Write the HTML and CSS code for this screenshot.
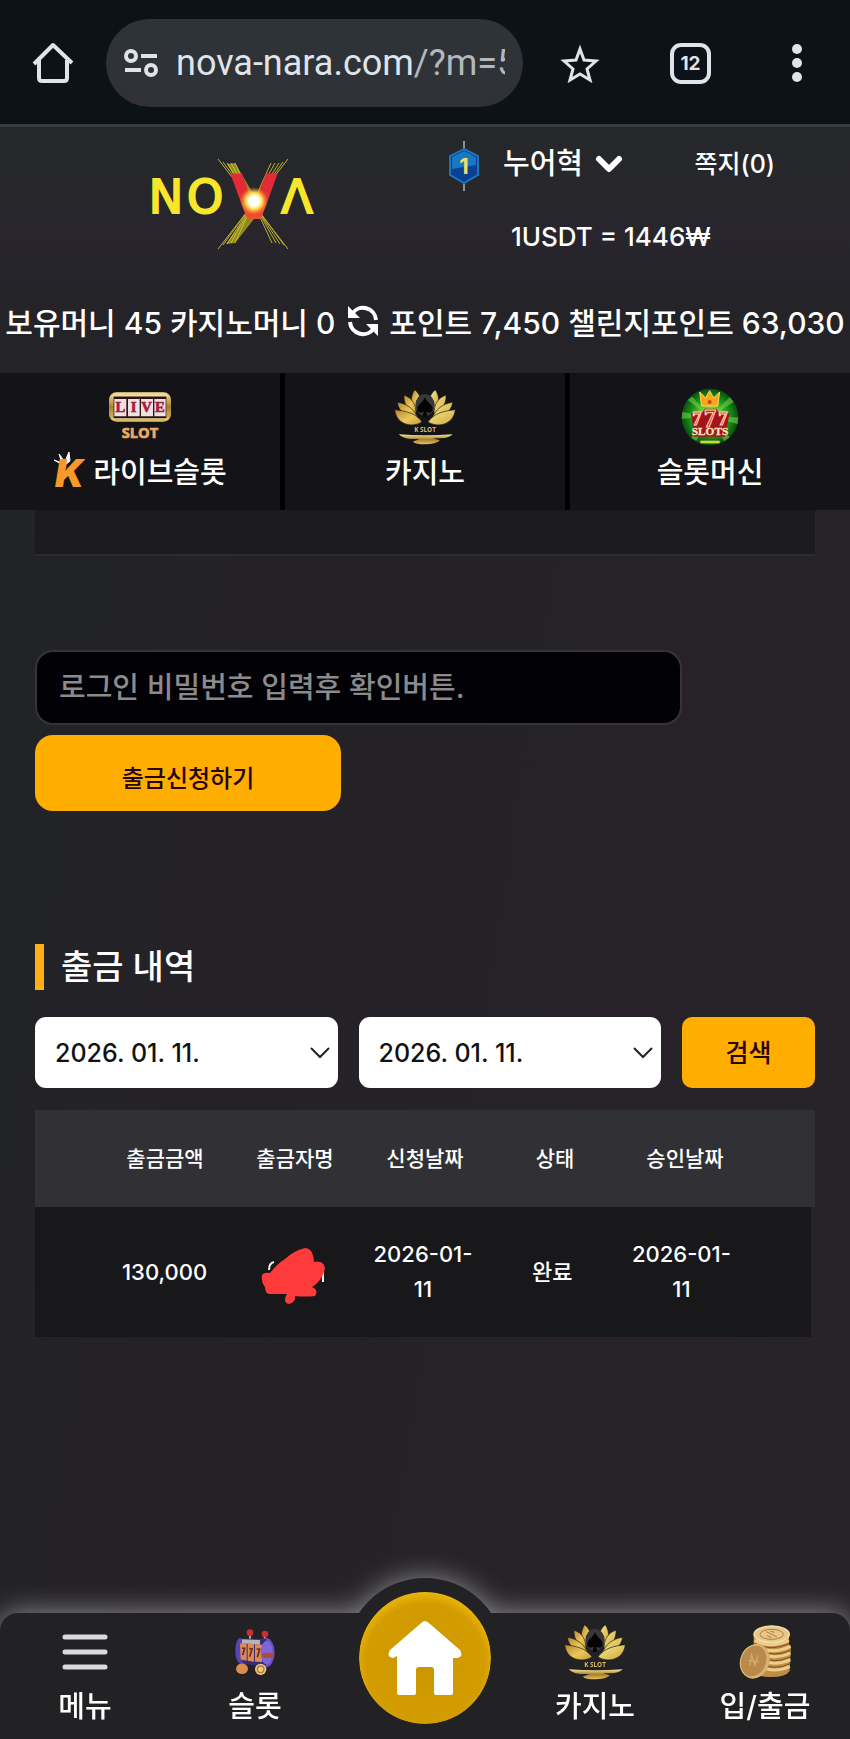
FILE: index.html
```
<!DOCTYPE html>
<html lang="ko">
<head>
  <meta charset="UTF-8">
  <meta name="viewport" content="width=device-width, initial-scale=1.0">
  <title>NOVA - 출금신청</title>
  <link rel="stylesheet" href="styles.css">
</head>
<body>
  <!-- Shared gradients and symbols -->
  <svg class="defs" width="0" height="0" aria-hidden="true">
    <defs>
      <linearGradient id="gold" x1="0" y1="0" x2="1" y2="1">
        <stop offset="0" stop-color="#b9822b"/>
        <stop offset="0.55" stop-color="#e9c95c"/>
        <stop offset="1" stop-color="#c79a35"/>
      </linearGradient>
      <linearGradient id="gold-light" x1="0" y1="0" x2="1" y2="1">
        <stop offset="0" stop-color="#f5ec8a"/>
        <stop offset="1" stop-color="#cfa53c"/>
      </linearGradient>
      <linearGradient id="gold-bar" x1="0" y1="0" x2="0" y2="1">
        <stop offset="0" stop-color="#f4e59a"/>
        <stop offset="0.5" stop-color="#a87f2c"/>
        <stop offset="1" stop-color="#e2c35f"/>
      </linearGradient>
      <symbol id="lotus" viewBox="0 0 186 168">
        <g fill="url(#gold)" stroke="#1a181a" stroke-width="2">
          <path d="M62 2 C82 18 84 40 70 66 C48 46 48 24 62 2Z"/>
          <path d="M30 18 C56 28 66 48 66 74 C42 64 28 44 30 18Z"/>
          <path d="M10 40 C40 44 62 62 72 88 C40 86 14 70 10 40Z"/>
          <path d="M2 62 C36 66 64 72 84 98 C62 116 8 112 2 62Z"/>
        </g>
        <g fill="url(#gold-light)" stroke="#1a181a" stroke-width="2">
          <path d="M124 2 C104 18 102 40 116 66 C138 46 138 24 124 2Z"/>
          <path d="M156 18 C130 28 120 48 120 74 C144 64 158 44 156 18Z"/>
          <path d="M176 40 C146 44 124 62 114 88 C146 86 172 70 176 40Z"/>
          <path d="M184 62 C150 66 122 72 102 98 C124 116 178 112 184 62Z"/>
        </g>
        <ellipse cx="93" cy="48" rx="29" ry="33" fill="#37373c"/>
        <path d="M93 24 C88 42 68 46 70 62 C72 74 86 72 90 66 L86 84 H100 L96 66 C100 72 114 74 116 62 C118 46 98 42 93 24Z" fill="#050506"/>
        <text x="93" y="129" class="lotus-text">K SLOT</text>
        <path d="M14 136 Q93 142 176 136 Q164 148 140 148 H116 L138 154 Q126 166 93 166 Q66 166 56 158 L76 150 H50 Q26 148 14 136Z" fill="url(#gold-bar)"/>
      </symbol>
    </defs>
  </svg>

  <!-- Browser bar -->
  <div class="browser-bar">
    <button class="browser-btn" aria-label="홈">
      <svg width="42" height="42" viewBox="0 0 42 42" fill="none" stroke="#dfe3ea" stroke-width="4">
        <path d="M2 22 L21 3 L40 21 M7 18 V36 Q7 39 10 39 H32 Q35 39 35 36 V18" stroke-linejoin="round"/>
      </svg>
    </button>
    <div class="address">
      <svg class="address-icon" width="34" height="28" viewBox="0 0 34 28" fill="none" stroke="#dfe3ea" stroke-width="4">
        <circle cx="7" cy="7" r="5"/>
        <path d="M17 7 H33 M1 21 H17"/>
        <circle cx="27" cy="21" r="5"/>
      </svg>
      <span class="address-text">nova-nara.com<span class="address-query">/?m=5</span></span>
    </div>
    <button class="browser-btn star" aria-label="북마크">
      <svg width="40" height="40" viewBox="0 0 40 40" fill="none" stroke="#dfe3ea" stroke-width="3">
        <path d="M20 6 L24 17 L36 18 L27 26 L30 37 L20 31 L10 37 L13 26 L4 18 L16 17 Z"/>
      </svg>
    </button>
    <button class="browser-btn tabs" aria-label="탭">12</button>
    <button class="browser-btn more" aria-label="더보기">
      <svg width="10" height="38" viewBox="0 0 10 38" fill="#dfe3ea">
        <circle cx="5" cy="5" r="5"/><circle cx="5" cy="19" r="5"/><circle cx="5" cy="33" r="5"/>
      </svg>
    </button>
  </div>

  <!-- Site header -->
  <header class="header">
    <a href="#" class="logo" aria-label="NOVA">
      <svg width="172" height="94" viewBox="0 0 172 94">
        <defs>
          <radialGradient id="flare">
            <stop offset="0.35" stop-color="#fff"/>
            <stop offset="0.6" stop-color="#ffd94a"/>
            <stop offset="1" stop-color="#ff8a1e" stop-opacity="0"/>
          </radialGradient>
          <linearGradient id="vred" x1="0" y1="0" x2="0" y2="1">
            <stop offset="0.4" stop-color="#e32a35"/>
            <stop offset="1" stop-color="#f2672f"/>
          </linearGradient>
        </defs>
        <g stroke="#bdb42c" stroke-width="1">
          <path d="M71 2 L141 92 M76 5 L137 88 M80 6 L133 87 M84 6 L129 86 M88 6 L125 86"/>
          <path d="M141 2 L71 92 M136 5 L76 88 M132 6 L80 87 M128 6 L84 86 M124 6 L88 86"/>
        </g>
        <path d="M80 7 L88 6 L107 38 L102 44Z M100 58 L107 62 L88 86 L79 87Z" fill="#d8cc22" opacity="0.6"/>
        <text x="19" y="56" class="logo-text">N</text>
        <text x="58" y="56" class="logo-text">O</text>
        <text x="150" y="56" class="logo-text">Λ</text>
        <text x="107" y="62" class="logo-v">V</text>
        <circle cx="107" cy="44" r="14" fill="url(#flare)"/>
      </svg>
    </a>
    <div class="account">
      <div class="account-row">
        <svg width="30" height="50" viewBox="0 0 30 50">
          <path d="M15 0 V50" stroke="#8d9094" stroke-width="2"/>
          <path d="M15 8 L29 15 V34 L15 42 L1 34 V15Z" fill="#0b3f92" stroke="#1c75b8" stroke-width="2"/>
          <path d="M15 10 L27 16 V24 L3 28 V16Z" fill="#1878c4"/>
          <text x="15" y="33" class="badge-text">1</text>
        </svg>
        <button class="user">누어혁
          <svg width="28" height="18" viewBox="0 0 28 18" fill="none" stroke="#fff" stroke-width="6" stroke-linecap="round" stroke-linejoin="round">
            <path d="M4 4 L14 14 L24 4"/>
          </svg>
        </button>
        <a href="#" class="message">쪽지(0)</a>
      </div>
      <div class="rate">1USDT = 1446₩</div>
    </div>
  </header>

  <!-- Balances -->
  <div class="balance">
    <span>보유머니 45 카지노머니 0</span>
    <button class="refresh" aria-label="새로고침">
      <svg width="32" height="32" viewBox="0 0 32 32">
        <path d="M5 9 A13 13 0 0 1 29 15 M27 23 A13 13 0 0 1 3 17" fill="none" stroke="#fff" stroke-width="4"/>
        <path d="M1 1 V13 H13Z M31 31 V19 H19Z" fill="#fff"/>
      </svg>
    </button>
    <span>포인트 7,450 챌린지포인트 63,030</span>
  </div>

  <!-- Game tabs -->
  <nav class="game-nav">
    <a href="#" class="game-item">
      <span class="game-icon">
        <svg width="64" height="52" viewBox="0 0 190 156">
          <rect x="2" y="4" width="186" height="88" rx="22" fill="url(#gold-bar)"/>
          <rect x="16" y="12" width="158" height="74" rx="4" fill="#2a1417"/>
          <path d="M18 24 H54 V76 H18Z M59 24 H94 V76 H59Z M98 24 H134 V76 H98Z M138 24 H172 V76 H138Z" fill="#eedfe1"/>
          <path d="M12 14 H178 M12 84 H178" stroke="#f2dfa0" stroke-width="5"/>
          <text x="36" y="64" class="live-text">L</text>
          <text x="76" y="64" class="live-text">I</text>
          <text x="115" y="64" class="live-text">V</text>
          <text x="155" y="64" class="live-text">E</text>
          <text x="95" y="140" class="slot-text">SLOT</text>
        </svg>
      </span>
      <span class="game-label">
        <svg class="k-mark" width="36" height="38" viewBox="0 0 36 38">
          <path d="M1 9 L8 13 L12 14 L17 10 L16 1 L13 8 L12 11 L6 3 L9 12Z" fill="#fff" stroke="#fff"/>
          <text x="2" y="36" class="k-text">K</text>
        </svg>
        라이브슬롯
      </span>
    </a>
    <a href="#" class="game-item">
      <span class="game-icon"><svg width="62" height="56"><use href="#lotus"/></svg></span>
      <span class="game-label">카지노</span>
    </a>
    <a href="#" class="game-item">
      <span class="game-icon">
        <svg width="58" height="58" viewBox="0 0 174 174">
          <defs>
            <radialGradient id="green">
              <stop offset="0.2" stop-color="#a8e23a"/>
              <stop offset="0.65" stop-color="#1f9a1d"/>
              <stop offset="1" stop-color="#06500f"/>
            </radialGradient>
          </defs>
          <circle cx="87" cy="87" r="85" fill="url(#green)"/>
          <path d="M87 87 L20 36 L34 26Z M87 87 L146 28 L158 42Z M87 87 L2 92 L4 72Z M87 87 L172 88 L170 108Z M87 87 L30 150 L46 158Z M87 87 L130 160 L146 148Z" fill="#6fce45" opacity="0.6"/>
          <path d="M62 54 L56 12 L74 30 L86 8 L98 30 L116 12 L110 54Z" fill="#f6a51d" stroke="#ffdc67" stroke-width="3"/>
          <circle cx="86" cy="42" r="6" fill="#c9401c"/>
          <path d="M30 76 L66 72 L70 62 H106 L112 72 L146 76 L132 146 H40Z" fill="#a3141c"/>
          <text x="48" y="112" class="seven-text">7</text>
          <text x="126" y="112" class="seven-text">7</text>
          <text x="87" y="116" class="seven-text big">7</text>
          <text x="87" y="142" class="slots-text">SLOTS</text>
          <path d="M58 162 H116" stroke="#c9d93a" stroke-width="8"/>
        </svg>
      </span>
      <span class="game-label">슬롯머신</span>
    </a>
  </nav>

  <main class="content">
    <div class="panel-end"></div>

    <!-- Withdraw form -->
    <form class="withdraw-form">
      <input type="password" class="password" placeholder="로그인 비밀번호 입력후 확인버튼." aria-label="로그인 비밀번호">
      <button type="button" class="submit">출금신청하기</button>
    </form>

    <!-- Withdraw history -->
    <h2 class="title">출금 내역</h2>
    <form class="search-form">
      <select class="date" aria-label="시작일"><option>2026. 01. 11.</option></select>
      <select class="date" aria-label="종료일"><option>2026. 01. 11.</option></select>
      <button type="button" class="search">검색</button>
    </form>
    <table class="history">
      <thead>
        <tr><th>출금금액</th><th>출금자명</th><th>신청날짜</th><th>상태</th><th>승인날짜</th></tr>
      </thead>
      <tbody>
        <tr>
          <td>130,000</td>
          <td>
            <svg class="scribble" width="66" height="64" viewBox="0 -8 66 64">
              <path d="M8 22 Q8 15 13 14 M62 20 V34" fill="none" stroke="#eee" stroke-width="2"/>
              <path d="M1 27 Q3 24 9 25 Q16 16 24 11 Q34 2 44 0 Q52 0 53 14 Q62 12 64 20 Q62 32 51 39 Q58 42 54 48 Q44 49 34 48 Q35 54 28 56 Q21 54 26 46 H8 Q4 45 4 39 Q0 34 1 27Z" fill="#ff3a3a"/>
            </svg>
          </td>
          <td>2026-01-11</td>
          <td>완료</td>
          <td>2026-01-11</td>
        </tr>
      </tbody>
    </table>
  </main>

  <!-- Bottom menu -->
  <nav class="bottom-nav">
    <a href="#" class="bottom-item">
      <span class="bottom-icon">
        <svg width="46" height="38" viewBox="0 0 46 38" stroke="#d9d9e0" stroke-width="5" stroke-linecap="round">
          <path d="M3 4 H43 M3 19 H43 M3 34 H43"/>
        </svg>
      </span>
      메뉴
    </a>
    <a href="#" class="bottom-item">
      <span class="bottom-icon">
        <svg width="42" height="48" viewBox="0 0 126 144">
          <path d="M48 34 V14 M92 38 V16" stroke="#c9b8c8" stroke-width="5"/>
          <circle cx="48" cy="14" r="10" fill="#c92f2f"/><circle cx="93" cy="18" r="10" fill="#c92f2f"/>
          <ellipse cx="96" cy="74" rx="26" ry="44" fill="#6a4fc0"/>
          <path d="M20 32 L96 32 V118 L20 106Z" fill="#3d2b78"/>
          <ellipse cx="18" cy="68" rx="14" ry="38" fill="#5a44b5"/>
          <path d="M24 34 L78 36 V50 L24 46Z" fill="#b9b2bd"/>
          <path d="M18 48 Q20 44 38 46 V98 L20 94Z M41 46 L60 48 V101 L41 98Z M63 48 L84 50 V102 L63 101Z" fill="#d98a55"/>
          <path d="M24 60 L32 61 L26 82 M46 62 L54 63 L47 86 M68 63 L77 64 L70 88" fill="none" stroke="#6b2b1f" stroke-width="5"/>
          <ellipse cx="98" cy="74" rx="18" ry="35" fill="#8064dc"/>
          <path d="M92 82 H112" stroke="#a84f3b" stroke-width="16" stroke-linecap="round"/>
          <ellipse cx="24" cy="122" rx="18" ry="16" fill="#d98e4f"/>
          <circle cx="80" cy="124" r="17" fill="#f0c980"/><circle cx="80" cy="124" r="10" fill="none" stroke="#ab793e" stroke-width="4"/>
        </svg>
      </span>
      슬롯
    </a>
    <a href="#" class="home" aria-label="홈으로">
      <svg width="74" height="76" viewBox="0 0 74 76">
        <path d="M37 1 Q39 1 42 4 L72 30 Q76 37 69 38 H65 V73 Q65 75 63 75 H48 Q46 75 46 73 V50 Q46 47 43 47 H31 Q28 47 28 50 V73 Q28 75 26 75 H11 Q9 75 9 73 V36 L5 38 Q-2 37 2 30 L32 4 Q35 1 37 1Z" fill="#fff"/>
      </svg>
    </a>
    <a href="#" class="bottom-item">
      <span class="bottom-icon"><svg width="62" height="56"><use href="#lotus"/></svg></span>
      카지노
    </a>
    <a href="#" class="bottom-item">
      <span class="bottom-icon">
        <svg width="52" height="54" viewBox="0 0 156 162">
          <path d="M44 28 V140 Q60 158 98 156 Q140 156 152 138 L156 64 L150 58 V28Z" fill="#c08c47"/>
          <path d="M46 46 Q96 72 150 46 M48 64 Q104 90 154 64 M56 84 Q108 106 154 84 M60 104 Q108 126 154 104 M60 124 Q108 146 152 124" fill="none" stroke="#edcd88" stroke-width="9"/>
          <path d="M46 56 Q96 80 150 56 M56 76 Q108 98 154 76 M60 96 Q108 118 154 96 M60 116 Q108 138 154 116" fill="none" stroke="#7d5120" stroke-width="3"/>
          <ellipse cx="98" cy="28" rx="53" ry="25" fill="#e8c788" stroke="#f6e2af" stroke-width="4"/>
          <ellipse cx="98" cy="28" rx="35" ry="15" fill="none" stroke="#ad803f" stroke-width="3"/>
          <path d="M82 20 L114 36 M94 18 L106 22 M84 32 L98 38" stroke="#ad803f" stroke-width="3"/>
          <ellipse cx="48" cy="109" rx="43" ry="53" transform="rotate(20 48 109)" fill="#d6ad69"/>
          <ellipse cx="44" cy="108" rx="39" ry="49" transform="rotate(20 44 108)" fill="#b98a4b" stroke="#e3bf7d" stroke-width="3"/>
          <path d="M32 122 L38 90 L48 120 L56 92 M28 106 L60 110" fill="none" stroke="#d5ab68" stroke-width="4"/>
        </svg>
      </span>
      입/출금
    </a>
  </nav>
</body>
</html>
```
FILE: styles.css
```
/* General Styles */
* {
  box-sizing: border-box;
}

body {
  font-family: 'Inter', 'Noto Sans CJK KR', sans-serif;
  font-weight: 500;
  font-size: 29px;
  margin: 0;
  min-height: 100vh;
  display: flex;
  flex-direction: column;
  background: linear-gradient(100deg, #202427 0%, #252227 35%, #272329 100%);
  color: #fff;
}

a {
  color: #fff;
  text-decoration: none;
}

button,
input,
select {
  font: inherit;
  color: inherit;
  border: none;
  background: none;
  padding: 0;
  margin: 0;
}

button {
  cursor: pointer;
}

svg {
  display: block;
  flex-shrink: 0;
}

.defs {
  position: absolute;
}

/* Browser bar */
.browser-bar {
  display: flex;
  align-items: center;
  height: 127px;
  padding: 2px 48px 0 32px;
  background: #0d1118;
  border-bottom: 3px solid #373b42;
}

.browser-btn {
  display: flex;
  align-items: center;
  justify-content: center;
}

.address {
  flex: 1;
  min-width: 0;
  display: flex;
  align-items: center;
  height: 88px;
  margin-left: 32px;
  padding: 0 18px;
  border-radius: 44px;
  background: linear-gradient(#2d3438, #303136);
}

.address-icon {
  margin-right: 18px;
}

.address-text {
  flex: 1;
  overflow: hidden;
  white-space: nowrap;
  font-family: 'Roboto', sans-serif;
  font-weight: 400;
  font-size: 36px;
  color: #dfe3ea;
}

.address-query {
  color: #b4b8bd;
}

.star {
  margin-left: 37px;
}

.tabs {
  width: 41px;
  height: 41px;
  margin: 0 81px 0 70px;
  border: 4px solid #dfe3ea;
  border-radius: 11px;
  color: #dfe3ea;
  font-size: 19px;
  font-weight: 700;
}

/* Header */
.header {
  display: grid;
  grid-template-columns: 1fr 1fr;
  height: 153px;
  background: linear-gradient(#25282b, #28262c 60%, #26252b);
}

.logo {
  padding: 30px 0 0 147px;
}

.logo-text {
  font: 400 46px 'DejaVu Sans', sans-serif;
  fill: #f8e62c;
  stroke: #f8e62c;
  stroke-width: 2px;
  text-anchor: middle;
}

.logo-v {
  font: 700 62px 'DejaVu Sans', sans-serif;
  fill: url(#vred);
  text-anchor: middle;
}

.account {
  padding: 14px 75px 0 24px;
}

.account-row {
  display: flex;
  align-items: center;
  height: 50px;
  line-height: 44px;
}

.badge-text {
  font: 700 22px 'Inter', sans-serif;
  fill: #f3dc6a;
  text-anchor: middle;
}

.user {
  display: flex;
  align-items: center;
  gap: 12px;
  margin-left: 24px;
  padding-bottom: 4px;
}

.message {
  margin-left: auto;
  padding-bottom: 4px;
  font-size: 25px;
}

.rate {
  margin: 28px 0 0 62px;
  font-size: 26px;
  line-height: 36px;
  white-space: nowrap;
}

/* Balances */
.balance {
  display: flex;
  align-items: center;
  justify-content: center;
  height: 93px;
  padding-bottom: 12px;
  background: #242328;
  font-size: 30px;
  white-space: nowrap;
}

.refresh {
  margin: 0 10px 0 12px;
}

/* Game tabs */
.game-nav {
  display: grid;
  grid-template-columns: repeat(3, 1fr);
  gap: 5px;
  background: #000;
}

.game-item {
  display: flex;
  flex-direction: column;
  align-items: center;
  padding: 14px 0 17px;
  background: #141317;
}

.game-icon {
  display: flex;
  align-items: center;
  height: 60px;
}

.game-label {
  display: flex;
  align-items: center;
  gap: 4px;
  height: 46px;
}

.lotus-text {
  font: 700 19px 'Open Sans', sans-serif;
  fill: #dcb866;
  text-anchor: middle;
}

.live-text {
  font: 700 44px 'Liberation Serif', serif;
  fill: #a81b39;
  stroke: #a81b39;
  stroke-width: 2px;
  text-anchor: middle;
}

.slot-text {
  font: 700 44px 'Open Sans', sans-serif;
  fill: #f0a964;
  stroke: #f0a964;
  stroke-width: 2px;
  text-anchor: middle;
}

.k-text {
  font: italic 900 38px 'Inter', sans-serif;
  fill: #f8982a;
}

.seven-text {
  font: 700 56px 'Liberation Serif', serif;
  fill: #d81f26;
  stroke: #ffd9b0;
  stroke-width: 3px;
  text-anchor: middle;
}

.seven-text.big {
  font-size: 74px;
}

.slots-text {
  font: 700 34px 'Liberation Serif', serif;
  fill: #ffe2b8;
  stroke: #ffe2b8;
  stroke-width: 1px;
  text-anchor: middle;
}

/* Content */
.content {
  flex: 1;
  padding: 0 35px 80px;
}

.panel-end {
  height: 46px;
  background: #1b1a1e;
  border-bottom: 2px solid #2e2c32;
}

.withdraw-form {
  display: flex;
  flex-direction: column;
  align-items: flex-start;
  gap: 10px;
  padding-top: 94px;
}

.password {
  width: 83%;
  height: 75px;
  padding: 0 22px;
  border: 2px solid #36343a;
  border-radius: 18px;
  background: #020105;
}

.password::placeholder {
  color: #8b8a8d;
}

.submit {
  width: 306px;
  height: 76px;
  padding-top: 6px;
  border-radius: 18px;
  background: #ffae00;
  color: #24060a;
  font-size: 24px;
}

.title {
  margin: 133px 0 27px;
  padding-left: 17px;
  border-left: 9px solid #ffae14;
  font-size: 34px;
  font-weight: 500;
  line-height: 46px;
}

.search-form {
  display: flex;
  gap: 21px;
}

.date {
  flex: 1;
  min-width: 0;
  height: 71px;
  padding: 0 20px;
  border-radius: 11px;
  appearance: none;
  background: #fff url("data:image/svg+xml,%3Csvg xmlns='http://www.w3.org/2000/svg' width='20' height='12' fill='none' stroke='%23222' stroke-width='2'%3E%3Cpath d='M1 1L10 10L19 1'/%3E%3C/svg%3E") no-repeat right 8px center;
  color: #111;
  font-size: 25px;
}

.search {
  width: 133px;
  height: 71px;
  padding-bottom: 4px;
  border-radius: 10px;
  background: #ffae00;
  color: #24060a;
  font-size: 25px;
}

/* History table */
.history {
  display: block;
  margin-top: 22px;
  font-size: 21px;
  line-height: 35px;
}

.history thead,
.history tbody {
  display: block;
}

.history tr {
  display: grid;
  grid-template-columns: repeat(5, 1fr);
  align-items: center;
  padding: 0 65px;
}

.history thead tr {
  height: 97px;
  background: #313135;
}

.history tbody tr {
  height: 130px;
  margin-right: 4px;
  background: #18181a;
  font-size: 22px;
}

.history th,
.history td {
  padding: 0;
  font-weight: 500;
  text-align: center;
}

.history td:nth-child(n + 3) {
  padding: 0 12px;
}

.scribble {
  margin: 0 auto;
}

/* Bottom menu */
.bottom-nav {
  position: sticky;
  bottom: 0;
  display: grid;
  grid-template-columns: repeat(5, 1fr);
  height: 126px;
  border-radius: 18px 18px 0 0;
  background: #222225;
  filter: drop-shadow(0 0 14px rgba(255, 255, 255, 0.5));
}

.bottom-item {
  display: flex;
  flex-direction: column;
  align-items: center;
  padding-top: 10px;
  line-height: 52px;
}

.bottom-icon {
  display: flex;
  align-items: center;
  height: 58px;
}

.home {
  display: flex;
  align-items: center;
  justify-content: center;
  justify-self: center;
  width: 160px;
  height: 160px;
  margin-top: -35px;
  border: 14px solid #222225;
  border-radius: 50%;
  background: radial-gradient(circle at 50% 54%, #cb9500 0%, #d39d00 62%, #f0bc08 76%);
  background-clip: padding-box;
}
```
